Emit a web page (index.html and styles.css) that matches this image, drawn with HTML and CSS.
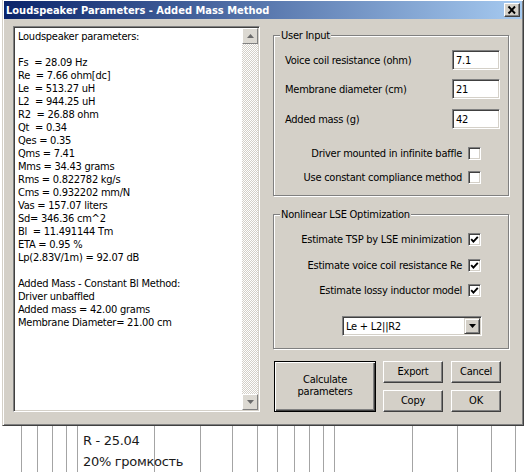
FILE: index.html
```html
<!DOCTYPE html>
<html>
<head>
<meta charset="utf-8">
<title>Loudspeaker Parameters - Added Mass Method</title>
<link rel="stylesheet" href="styles.css">
</head>
<body>
<div class="dialog">
  <div class="titlebar">
    <span class="title">Loudspeaker Parameters - Added Mass Method</span>
    <span class="close"><svg width="14" height="12" viewBox="0 0 14 12"><path d="M3.5 2.5 L10 9.5 M10 2.5 L3.5 9.5" stroke="#000" stroke-width="1.9" fill="none"/></svg></span>
  </div>
  <div class="content">
    <div class="memo">
      <div class="memo-text">Loudspeaker parameters:

Fs  = 28.09 Hz
Re  = 7.66 ohm[dc]
Le  = 513.27 uH
L2  = 944.25 uH
R2  = 26.88 ohm
Qt  = 0.34
Qes = 0.35
Qms = 7.41
Mms = 34.43 grams
Rms = 0.822782 kg/s
Cms = 0.932202 mm/N
Vas = 157.07 liters
Sd= 346.36 cm^2
Bl  = 11.491144 Tm
ETA = 0.95 %
Lp(2.83V/1m) = 92.07 dB

Added Mass - Constant Bl Method:
Driver unbaffled
Added mass = 42.00 grams
Membrane Diameter= 21.00 cm</div>
      <div class="scrollbar">
        <div class="sb-btn"><svg width="7" height="4" viewBox="0 0 7 4"><path d="M3.5 0 L7 4 L0 4 Z" fill="#6b6b6b"/></svg></div>
        <div class="sb-track"></div>
        <div class="sb-btn"><svg width="7" height="4" viewBox="0 0 7 4"><path d="M0 0 L7 0 L3.5 4 Z" fill="#6b6b6b"/></svg></div>
      </div>
    </div>
    <div class="side">
      <fieldset class="group group-input">
        <legend>User Input</legend>
        <div class="gbody">
          <div class="field"><span>Voice coil resistance (ohm)</span><span class="edit">7.1</span></div>
          <div class="field f2"><span>Membrane diameter (cm)</span><span class="edit">21</span></div>
          <div class="field f3"><span>Added mass (g)</span><span class="edit">42</span></div>
          <div class="check-row c1"><span>Driver mounted in infinite baffle</span><span class="cb"></span></div>
          <div class="check-row c2"><span>Use constant compliance method</span><span class="cb"></span></div>
        </div>
      </fieldset>
      <fieldset class="group group-lse">
        <legend>Nonlinear LSE Optimization</legend>
        <div class="gbody">
          <div class="check-row"><span>Estimate TSP by LSE minimization</span><span class="cb"><svg width="9" height="9" viewBox="0 0 9 9"><path d="M1.2 4.2 L3.4 6.6 L7.8 1.8" stroke="#000" stroke-width="1.9" fill="none"/></svg></span></div>
          <div class="check-row r2"><span>Estimate voice coil resistance Re</span><span class="cb"><svg width="9" height="9" viewBox="0 0 9 9"><path d="M1.2 4.2 L3.4 6.6 L7.8 1.8" stroke="#000" stroke-width="1.9" fill="none"/></svg></span></div>
          <div class="check-row r3"><span>Estimate lossy inductor model</span><span class="cb"><svg width="9" height="9" viewBox="0 0 9 9"><path d="M1.2 4.2 L3.4 6.6 L7.8 1.8" stroke="#000" stroke-width="1.9" fill="none"/></svg></span></div>
          <div class="combo-row">
            <div class="combo"><span class="combo-text">Le + L2||R2</span><span class="combo-btn"><svg width="7" height="4" viewBox="0 0 7 4"><path d="M0 0 L7 0 L3.5 4 Z" fill="#000"/></svg></span></div>
          </div>
        </div>
      </fieldset>
      <div class="buttons">
        <div class="btn btn-default">Calculate<br>parameters</div>
        <div class="btn-col">
          <div class="btn btn-mid">Export</div>
          <div class="btn btn-mid">Copy</div>
        </div>
        <div class="btn-col">
          <div class="btn btn-small">Cancel</div>
          <div class="btn btn-small">OK</div>
        </div>
      </div>
    </div>
  </div>
</div>
<div class="below">
  <div class="note">R - 25.04<br>20% громкость</div>
</div>
</body>
</html>
```
FILE: styles.css
```css
* { box-sizing: border-box; }
html, body { margin: 0; padding: 0; }
body {
  width: 527px;
  height: 472px;
  overflow: hidden;
  background: #fff;
  font-family: "DejaVu Sans Condensed", "Liberation Sans", sans-serif;
  font-size: 11px;
  line-height: 13px;
  letter-spacing: -0.25px;
  color: #000;
}
.dialog {
  margin: -1px 0 0 2px;
  width: 522px;
  height: 427px;
  background: #D4D0C8;
  border: 1px solid;
  border-color: #D4D0C8 #404040 #404040 #D4D0C8;
  box-shadow: inset 1px 1px #fff, inset -1px -1px #808080;
  padding: 1px;
  display: flex;
  flex-direction: column;
}
.titlebar {
  height: 18px;
  flex: none;
  display: flex;
  align-items: center;
  justify-content: space-between;
  padding: 0 2px 0 2px;
  background: linear-gradient(to right, #0A246A, #A6CAF0);
}
.title {
  color: #fff;
  font-weight: bold;
  font-size: 11px;
  letter-spacing: 0;
  white-space: nowrap;
}
.close {
  width: 16px;
  height: 14px;
  background: #D4D0C8;
  border: 1px solid;
  border-color: #fff #404040 #404040 #fff;
  box-shadow: inset -1px -1px #808080;
  display: flex;
  align-items: center;
  justify-content: center;
}
.close svg { display: block; }
.content {
  display: flex;
  align-items: flex-start;
  padding: 7px 0 0 9px;
}
.memo {
  width: 247px;
  height: 386px;
  background: #fff;
  border: 1px solid;
  border-color: #808080 #fff #fff #808080;
  box-shadow: inset 1px 1px #404040, inset -1px -1px #D4D0C8;
  padding: 1px;
  display: flex;
}
.memo-text {
  flex: 1;
  white-space: pre;
  padding: 2px 0 0 3px;
  overflow: hidden;
}
.scrollbar {
  width: 16px;
  flex: none;
  display: flex;
  flex-direction: column;
}
.sb-btn {
  width: 16px;
  height: 16px;
  background: #DCD9D2;
  border: 1px solid;
  border-color: #fff #808080 #808080 #fff;
  display: flex;
  align-items: center;
  justify-content: center;
}
.sb-btn svg { display: block; }
.sb-track {
  flex: 1;
  background: repeating-conic-gradient(#D4D0C8 0% 25%, #fff 0% 50%) 0 0 / 2px 2px;
}
.side {
  width: 236px;
  margin: 3px 0 0 13px;
}
.group {
  margin: 0;
  padding: 0;
  min-width: 0;
  border: 1px solid #808080;
  box-shadow: inset 1px 1px #fff, 1px 1px #fff;
}
.group legend {
  margin-left: 6px;
  padding: 0 1px;
  background: #D4D0C8;
  line-height: 13px;
}
.group-input .gbody { padding: 8px 8px 10px 11px; }
.group-lse { margin-top: 12px; }
.group-lse .gbody { padding: 10px 8px 12px 11px; }
.field {
  height: 20px;
  display: flex;
  align-items: center;
  justify-content: space-between;
}
.f2 { margin-top: 9px; }
.f3 { margin-top: 10px; }
.edit {
  width: 48px;
  height: 20px;
  background: #fff;
  border: 1px solid;
  border-color: #808080 #fff #fff #808080;
  box-shadow: inset 1px 1px #404040, inset -1px -1px #D4D0C8;
  padding: 3px 0 0 3px;
  line-height: 13px;
}
.check-row {
  height: 16px;
  display: flex;
  align-items: center;
  justify-content: flex-end;
  gap: 6px;
  margin-right: 19px;
}
.c1 { margin-top: 16px; }
.c2 { margin-top: 8px; }
.r2 { margin-top: 10px; }
.r3 { margin-top: 9px; }
.cb {
  width: 13px;
  height: 13px;
  flex: none;
  background: #fff;
  border: 1px solid;
  border-color: #808080 #fff #fff #808080;
  box-shadow: inset 1px 1px #404040, inset -1px -1px #D4D0C8;
  display: flex;
  align-items: center;
  justify-content: center;
}
.cb svg { display: block; }
.combo-row {
  display: flex;
  justify-content: flex-end;
  margin: 18px 18px 0 0;
}
.combo {
  width: 140px;
  height: 20px;
  background: #fff;
  border: 1px solid;
  border-color: #808080 #fff #fff #808080;
  box-shadow: inset 1px 1px #404040, inset -1px -1px #D4D0C8;
  padding: 1px;
  display: flex;
  align-items: center;
}
.combo-text { flex: 1; padding-left: 2px; }
.combo-btn {
  width: 16px;
  height: 16px;
  background: #D4D0C8;
  border: 1px solid;
  border-color: #D4D0C8 #404040 #404040 #D4D0C8;
  box-shadow: inset 1px 1px #fff, inset -1px -1px #808080;
  display: flex;
  align-items: center;
  justify-content: center;
}
.combo-btn svg { display: block; }
.buttons {
  display: flex;
  margin-top: 12px;
  padding-left: 1px;
}
.btn {
  display: flex;
  align-items: center;
  justify-content: center;
  text-align: center;
  background: #D4D0C8;
  border: 1px solid;
  border-color: #fff #404040 #404040 #fff;
  box-shadow: inset -1px -1px #808080;
  line-height: 12px;
}
.btn-default {
  width: 102px;
  height: 51px;
  border: 1px solid #000;
  box-shadow: inset 1px 1px #fff, inset -1px -1px #404040, inset -2px -2px #808080;
  padding-bottom: 2px;
}
.btn-col {
  display: flex;
  flex-direction: column;
  gap: 7px;
  margin-left: 7px;
}
.btn-col + .btn-col { margin-left: 8px; }
.btn-mid { width: 60px; height: 22px; }
.btn-small { width: 50px; height: 22px; }
.below {
  height: 46px;
  background-image:
    linear-gradient(#a4a4a4, #a4a4a4), linear-gradient(#a4a4a4, #a4a4a4),
    linear-gradient(#a4a4a4, #a4a4a4), linear-gradient(#a4a4a4, #a4a4a4),
    linear-gradient(#a4a4a4, #a4a4a4), linear-gradient(#a4a4a4, #a4a4a4),
    linear-gradient(#a4a4a4, #a4a4a4), linear-gradient(#a4a4a4, #a4a4a4),
    linear-gradient(#a4a4a4, #a4a4a4), linear-gradient(#a4a4a4, #a4a4a4),
    linear-gradient(#a4a4a4, #a4a4a4), linear-gradient(#a4a4a4, #a4a4a4),
    linear-gradient(#a4a4a4, #a4a4a4), linear-gradient(#a4a4a4, #a4a4a4),
    linear-gradient(#a4a4a4, #a4a4a4), linear-gradient(#a4a4a4, #a4a4a4),
    linear-gradient(#a4a4a4, #a4a4a4), linear-gradient(#a4a4a4, #a4a4a4);
  background-size: 1px 100%;
  background-repeat: no-repeat;
  background-position:
    21px 0, 37px 0, 52px 0, 66px 0, 77px 0, 154px 0, 200px 0, 232px 0, 257px 0,
    277px 0, 294px 0, 309px 0, 323px 0, 334px 0, 412px 0, 457px 0, 491px 0, 515px 0;
}
.note {
  padding: 4px 0 0 83px;
  font-family: "DejaVu Sans", "Liberation Sans", sans-serif;
  font-size: 13px;
  line-height: 21px;
  letter-spacing: -0.3px;
  color: #1a1a1a;
}
```
